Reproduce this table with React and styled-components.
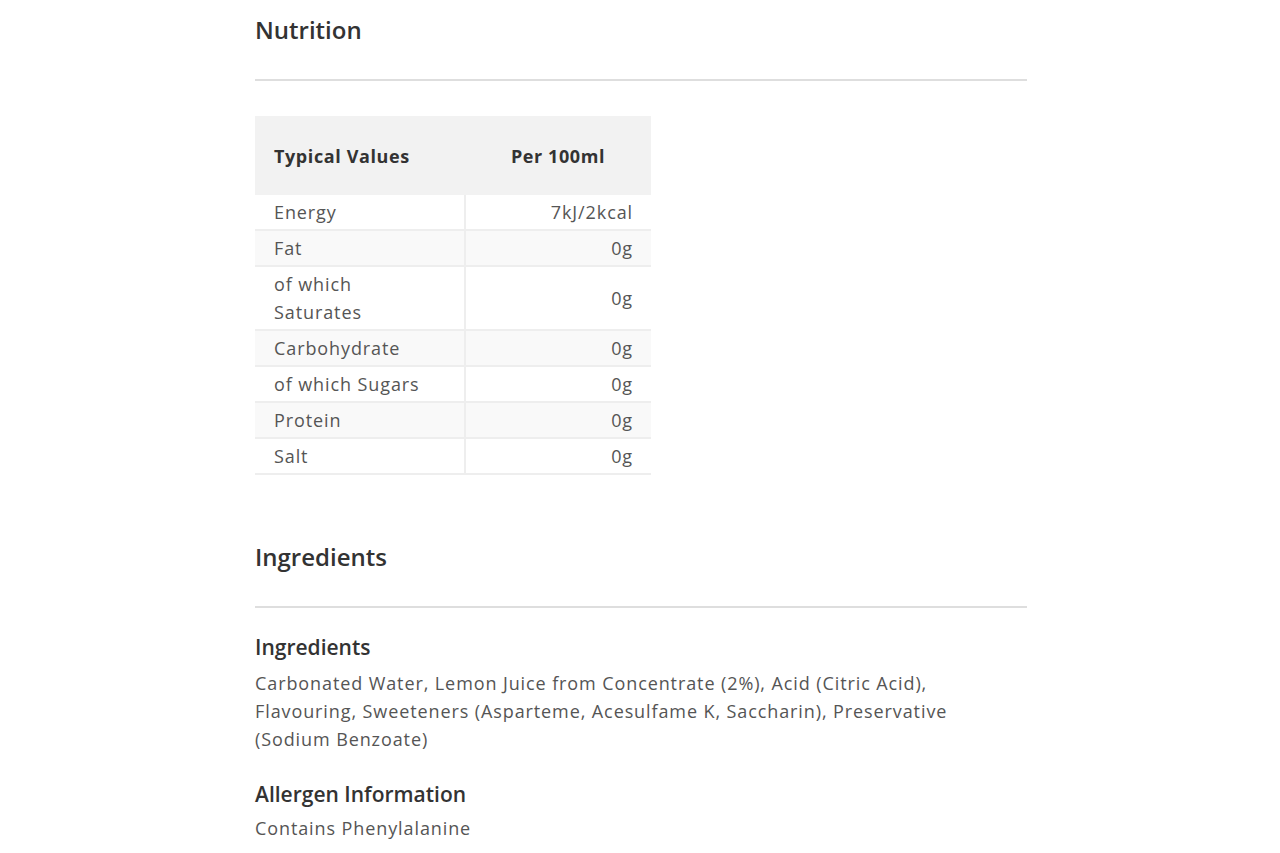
import React from 'react';
import styled, { createGlobalStyle } from 'styled-components';

const GlobalStyle = createGlobalStyle`
  body {
    margin: 0;
    background: #fff;
    font-family: 'Open Sans', 'Liberation Sans', sans-serif;
    color: #555;
  }
`;

const Wrapper = styled.div`
  width: 772px;
  margin-left: 255px;
  padding-top: 15px;
`;

const SectionTitle = styled.h2`
  margin: ${({ top }) => top || 0}px 0 0;
  font-size: 24px;
  line-height: 30px;
  font-weight: 600;
  color: #333;
  letter-spacing: 0;
`;

const Rule = styled.hr`
  margin: 34px 0 0;
  border: 0;
  height: 2px;
  background: #dedede;
`;

const Table = styled.table`
  margin-top: 35px;
  width: 396px;
  border-collapse: collapse;
  table-layout: fixed;
  font-size: 18px;
  line-height: 28px;
  letter-spacing: 0.9px;

  col.label {
    width: 210px;
  }
`;

const HeadCell = styled.th`
  height: 79px;
  padding: 0 19px;
  background: #f2f2f2;
  font-weight: 700;
  color: #333;
  font-size: 18px;
  letter-spacing: 0.6px;
  text-align: ${({ center }) => (center ? 'center' : 'left')};
`;

const Row = styled.tr`
  background: ${({ shaded }) => (shaded ? '#f9f9f9' : '#fff')};
  border-bottom: 2px solid #eeeeee;
`;

const Cell = styled.td`
  padding: 3px ${({ right }) => (right ? '18px' : '19px')};
  text-align: ${({ right }) => (right ? 'right' : 'left')};
  vertical-align: middle;
  border-left: ${({ right }) => (right ? '2px solid #eeeeee' : 'none')};
`;

const SubTitle = styled.h3`
  margin: ${({ top }) => top}px 0 0;
  font-size: 21px;
  line-height: 28px;
  font-weight: 600;
  color: #333;
`;

const Text = styled.p`
  margin: ${({ top }) => top}px 0 0;
  font-size: 18px;
  line-height: 28px;
  letter-spacing: 0.9px;
  color: #555;
`;

const rows = [
  ['Energy', '7kJ/2kcal'],
  ['Fat', '0g'],
  [
    <>
      of which
      <br />
      Saturates
    </>,
    '0g'
  ],
  ['Carbohydrate', '0g'],
  ['of which Sugars', '0g'],
  ['Protein', '0g'],
  ['Salt', '0g']
];

const App = () => {
  return (
    <>
      <GlobalStyle />
      <Wrapper>
        <SectionTitle>Nutrition</SectionTitle>
        <Rule />
        <Table>
          <colgroup>
            <col className='label' />
            <col />
          </colgroup>
          <thead>
            <tr>
              <HeadCell>Typical Values</HeadCell>
              <HeadCell center>Per 100ml</HeadCell>
            </tr>
          </thead>
          <tbody>
            {rows.map(([label, value], i) => (
              <Row key={i} shaded={i % 2 === 1}>
                <Cell>{label}</Cell>
                <Cell right>{value}</Cell>
              </Row>
            ))}
          </tbody>
        </Table>

        <SectionTitle top={67}>Ingredients</SectionTitle>
        <Rule />
        <SubTitle top={25}>Ingredients</SubTitle>
        <Text top={8}>
          Carbonated Water, Lemon Juice from Concentrate (2%), Acid (Citric
          Acid), Flavouring, Sweeteners (Asparteme, Acesulfame K, Saccharin),
          Preservative (Sodium Benzoate)
        </Text>
        <SubTitle top={27}>Allergen Information</SubTitle>
        <Text top={6}>Contains Phenylalanine</Text>
      </Wrapper>
    </>
  );
};

export default App;
